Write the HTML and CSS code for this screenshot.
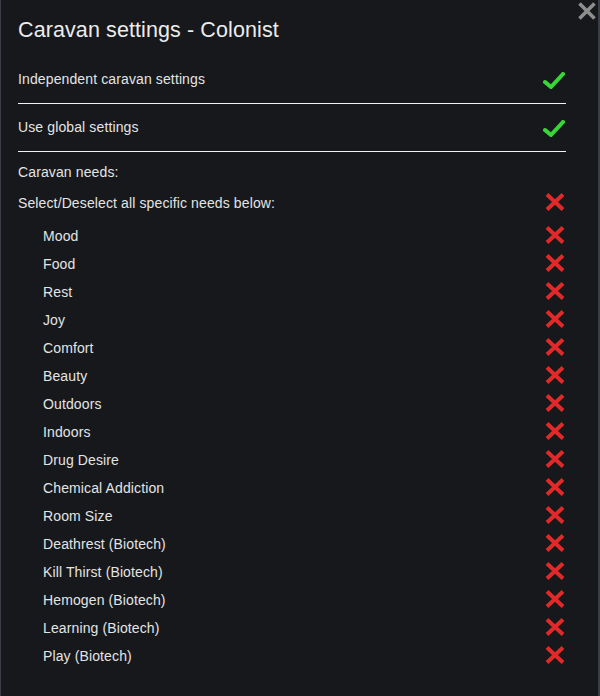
FILE: index.html
```html
<!DOCTYPE html>
<html lang="en">
<head>
    <meta charset="UTF-8">
    <meta name="viewport" content="width=device-width, initial-scale=1.0">
    <title>Caravan settings - Colonist</title>
    <link rel="stylesheet" href="styles.css">
</head>
<body>
    <div class="window">
        <!-- close button -->
        <svg class="close" viewBox="0 0 20 20"><path d="M2.5 2.5 L17.5 17.5 M17.5 2.5 L2.5 17.5"/></svg>

        <h1 class="title">Caravan settings - Colonist</h1>

        <div class="setting">
            <span>Independent caravan settings</span>
            <svg class="tick" viewBox="0 0 24 20"><path d="M3 12 L9 17 L21 4"/></svg>
        </div>
        <div class="setting">
            <span>Use global settings</span>
            <svg class="tick" viewBox="0 0 24 20"><path d="M3 12 L9 17 L21 4"/></svg>
        </div>

        <div class="label">Caravan needs:</div>
        <div class="row all">
            <span>Select/Deselect all specific needs below:</span>
            <svg class="cross" viewBox="0 0 22 20"><path d="M3 2.5 L19 17.5 M19 2.5 L3 17.5"/></svg>
        </div>

        <div class="needs">
            <div class="row"><span>Mood</span><svg class="cross" viewBox="0 0 22 20"><path d="M3 2.5 L19 17.5 M19 2.5 L3 17.5"/></svg></div>
            <div class="row"><span>Food</span><svg class="cross" viewBox="0 0 22 20"><path d="M3 2.5 L19 17.5 M19 2.5 L3 17.5"/></svg></div>
            <div class="row"><span>Rest</span><svg class="cross" viewBox="0 0 22 20"><path d="M3 2.5 L19 17.5 M19 2.5 L3 17.5"/></svg></div>
            <div class="row"><span>Joy</span><svg class="cross" viewBox="0 0 22 20"><path d="M3 2.5 L19 17.5 M19 2.5 L3 17.5"/></svg></div>
            <div class="row"><span>Comfort</span><svg class="cross" viewBox="0 0 22 20"><path d="M3 2.5 L19 17.5 M19 2.5 L3 17.5"/></svg></div>
            <div class="row"><span>Beauty</span><svg class="cross" viewBox="0 0 22 20"><path d="M3 2.5 L19 17.5 M19 2.5 L3 17.5"/></svg></div>
            <div class="row"><span>Outdoors</span><svg class="cross" viewBox="0 0 22 20"><path d="M3 2.5 L19 17.5 M19 2.5 L3 17.5"/></svg></div>
            <div class="row"><span>Indoors</span><svg class="cross" viewBox="0 0 22 20"><path d="M3 2.5 L19 17.5 M19 2.5 L3 17.5"/></svg></div>
            <div class="row"><span>Drug Desire</span><svg class="cross" viewBox="0 0 22 20"><path d="M3 2.5 L19 17.5 M19 2.5 L3 17.5"/></svg></div>
            <div class="row"><span>Chemical Addiction</span><svg class="cross" viewBox="0 0 22 20"><path d="M3 2.5 L19 17.5 M19 2.5 L3 17.5"/></svg></div>
            <div class="row"><span>Room Size</span><svg class="cross" viewBox="0 0 22 20"><path d="M3 2.5 L19 17.5 M19 2.5 L3 17.5"/></svg></div>
            <div class="row"><span>Deathrest (Biotech)</span><svg class="cross" viewBox="0 0 22 20"><path d="M3 2.5 L19 17.5 M19 2.5 L3 17.5"/></svg></div>
            <div class="row"><span>Kill Thirst (Biotech)</span><svg class="cross" viewBox="0 0 22 20"><path d="M3 2.5 L19 17.5 M19 2.5 L3 17.5"/></svg></div>
            <div class="row"><span>Hemogen (Biotech)</span><svg class="cross" viewBox="0 0 22 20"><path d="M3 2.5 L19 17.5 M19 2.5 L3 17.5"/></svg></div>
            <div class="row"><span>Learning (Biotech)</span><svg class="cross" viewBox="0 0 22 20"><path d="M3 2.5 L19 17.5 M19 2.5 L3 17.5"/></svg></div>
            <div class="row"><span>Play (Biotech)</span><svg class="cross" viewBox="0 0 22 20"><path d="M3 2.5 L19 17.5 M19 2.5 L3 17.5"/></svg></div>
        </div>
    </div>
</body>
</html>
```

FILE: styles.css
```css
* {
    margin: 0;
    padding: 0;
    box-sizing: border-box;
}

html, body {
    height: 100%;
    overflow: hidden;
    background: #16181c;
}

.window {
    position: relative;
    height: 696px;
    padding: 18px 32px 0 17px;
    background: #16181c;
    border-left: 1px solid #3a3f47;
    border-right: 2px solid #3a3f47;
    font-family: "Liberation Sans", Arial, sans-serif;
    color: #e4e4e4;
    font-size: 14px;
    letter-spacing: 0.12px;
}

/* close cross, top right corner */
.close {
    position: absolute;
    top: 1px;
    right: 1px;
    width: 20px;
    height: 20px;
    fill: none;
    stroke: #8e8e8e;
    stroke-width: 3.6;
}

.title {
    font-size: 21.5px;
    font-weight: normal;
    line-height: 25px;
    color: #ececec;
    letter-spacing: 0.1px;
}

.setting {
    display: flex;
    justify-content: space-between;
    align-items: center;
    height: 48px;
    border-bottom: 1px solid #f2f2f2;
}

.setting:first-of-type {
    margin-top: 13px;
}

.setting span {
    margin-top: -2px;
}

.tick {
    width: 24px;
    height: 20px;
    fill: none;
    stroke: #38d638;
    stroke-width: 4;
    stroke-linecap: round;
    stroke-linejoin: round;
    filter: drop-shadow(0 0 0.6px #0b5a0b);
}

.label {
    height: 28px;
    line-height: 30px;
    margin-top: 5px;
}

.row {
    display: flex;
    justify-content: space-between;
    align-items: center;
    height: 28px;
}

.row span {
    margin-top: 1px;
}

.all {
    margin-top: 3px;
}

.needs {
    margin-top: 5px;
    padding-left: 25px;
}

.cross {
    width: 22px;
    height: 20px;
    fill: none;
    stroke: #e02a2a;
    stroke-width: 4;
}
```
